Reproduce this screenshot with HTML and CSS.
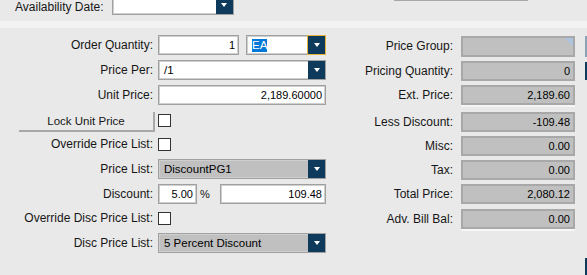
FILE: index.html
```html
<!DOCTYPE html>
<html lang="en">
<head>
  <meta charset="UTF-8">
  <title>Line Pricing</title>
  <link rel="stylesheet" href="styles.css">
</head>
<body>

  <!-- Availability -->
  <div class="topbar">
    <span class="top-label">Availability Date:</span>
    <div class="field combo date-combo">
      <span class="combo-text"></span>
      <span class="drop"></span>
    </div>
    <div class="cut-field"></div>
  </div>
  <div class="divider"></div>

  <div class="panel">
    <!-- Left side -->
    <div class="form left-form">
      <label>Order Quantity:</label>
      <div class="pair">
        <div class="field input qty">1</div>
        <div class="field combo uom">
          <span class="combo-text"><span class="selected">EA</span></span>
          <span class="drop focus"></span>
        </div>
      </div>

      <label>Price Per:</label>
      <div class="field combo">
        <span class="combo-text">/1</span>
        <span class="drop"></span>
      </div>

      <label>Unit Price:</label>
      <div class="field input">2,189.60000</div>

      <button class="lock-btn">Lock Unit Price</button>
      <div class="check-cell"><span class="check"></span></div>

      <label>Override Price List:</label>
      <div class="check-cell"><span class="check"></span></div>

      <label>Price List:</label>
      <div class="field combo locked">
        <span class="combo-text">DiscountPG1</span>
        <span class="drop"></span>
      </div>

      <label>Discount:</label>
      <div class="pair">
        <div class="field input pct">5.00</div>
        <span class="pct-sign">%</span>
        <div class="field input amount">109.48</div>
      </div>

      <label>Override Disc Price List:</label>
      <div class="check-cell"><span class="check"></span></div>

      <label>Disc Price List:</label>
      <div class="field combo locked">
        <span class="combo-text">5 Percent Discount</span>
        <span class="drop"></span>
      </div>
    </div>

    <!-- Right side -->
    <div class="form right-form">
      <label>Price Group:</label>
      <div class="ro group"></div>
      <label>Pricing Quantity:</label>
      <div class="ro">0</div>
      <label>Ext. Price:</label>
      <div class="ro lift">2,189.60</div>
      <label>Less Discount:</label>
      <div class="ro">-109.48</div>
      <label>Misc:</label>
      <div class="ro">0.00</div>
      <label>Tax:</label>
      <div class="ro">0.00</div>
      <label>Total Price:</label>
      <div class="ro">2,080.12</div>
      <label>Adv. Bill Bal:</label>
      <div class="ro lift">0.00</div>
    </div>

    <!-- next column, cut off by the window -->
    <div class="edge">
      <div class="edge-box pale"></div>
      <div class="edge-box dark"></div>
      <div class="edge-box dark bottom"></div>
    </div>
  </div>

</body>
</html>
```

FILE: styles.css
```css
body {
  margin: 0;
  font-family: "Liberation Sans", Arial, sans-serif;
  font-size: 12px;
  color: #161616;
  background: #e9e9e9;
  overflow: hidden;
  height: 275px;
}

.topbar {
  height: 21px;
  display: flex;
  align-items: flex-start;
}
.top-label {
  margin-left: 15px;
  line-height: 14px;
}
.date-combo {
  width: 122px;
  margin-left: 8px;
  margin-top: -5px;
}
.cut-field {
  width: 134px;
  height: 20px;
  margin-top: -19px;
  margin-left: 160px;
  border: 1px solid #a8a8a8;
  box-sizing: border-box;
}
.divider {
  height: 7px;
  background: #f2f2f2;
}

.panel {
  display: flex;
  align-items: flex-start;
  padding-top: 7px;
}

.form {
  display: grid;
  align-items: start;
}
.form label {
  text-align: right;
  line-height: 20px;
  white-space: nowrap;
}
.left-form {
  grid-template-columns: 153px 168px;
  grid-template-rows: 25px 25px 25px 24px 25px 25px 24px 25px 20px;
  column-gap: 5px;
}
.right-form {
  margin-left: 7px;
  margin-top: 1px;
  grid-template-columns: 120px 114px;
  grid-template-rows: 25px 24px 27px 24px 24px 24px 25px 20px;
  column-gap: 8px;
}

/* inputs */
.field {
  height: 20px;
  box-sizing: border-box;
  border: 1px solid #a0a0a0;
  box-shadow: inset 0 0 0 1px #cfcfcf;
  background: #fff;
  font-size: 11px;
  line-height: 18px;
  color: #000;
}
.input {
  text-align: right;
  padding-right: 3px;
}
.pair {
  display: flex;
  align-items: center;
}
.qty { width: 81px; }
.uom { width: 80px; margin-left: 7px; }
.pct { width: 39px; }
.pct-sign {
  width: 23px;
  padding-left: 3px;
  box-sizing: border-box;
  font-size: 11px;
}
.amount { width: 106px; }

.combo {
  display: flex;
}
.combo-text {
  flex: 1;
  padding-left: 5px;
  font-size: 11.5px;
  white-space: nowrap;
  overflow: hidden;
}
.combo.locked {
  background: #c0c0c0;
}
.selected {
  background: #0078d7;
  color: #fff;
  display: inline-block;
  line-height: 13px;
}
.drop {
  width: 17px;
  background: #0e3a5c;
  display: flex;
  align-items: center;
  justify-content: center;
}
.drop::after {
  content: "";
  border-left: 3px solid transparent;
  border-right: 3px solid transparent;
  border-top: 4px solid #fff;
}
.drop.focus {
  outline: 1px solid #e6b43a;
}

.lock-btn {
  justify-self: end;
  width: 136px;
  height: 20px;
  margin-top: 2px;
  margin-right: -2px;
  padding: 0;
  background: #e9e9e9;
  border: none;
  border-right: 2px solid #a8a8a8;
  border-bottom: 2px solid #a8a8a8;
  font-family: inherit;
  font-size: 11.5px;
  color: #161616;
}

.check-cell {
  height: 20px;
  display: flex;
  align-items: center;
}
.check {
  width: 13px;
  height: 13px;
  box-sizing: border-box;
  border: 1px solid #333;
  background: #fff;
}

/* read-only results */
.ro {
  height: 20px;
  box-sizing: border-box;
  border: 2px solid #a8a8a8;
  background: #c0c0c0;
  font-size: 11px;
  line-height: 16px;
  text-align: right;
  padding-right: 3px;
  color: #000;
}
.ro.group {
  height: 21px;
  background: linear-gradient(225deg, #adc3de 6px, #c0c0c0 6px);
}
.ro.lift {
  box-shadow: 0 2px 0 #f6f6f6;
}

.edge {
  margin-left: 10px;
  margin-top: 1px;
  display: flex;
  flex-direction: column;
}
.edge-box {
  width: 17px;
  height: 21px;
}
.edge-box.pale { background: #8aa2b8; }
.edge-box.dark { background: #0e3a5c; height: 18px; margin-top: 5px; }
.edge-box.bottom { margin-top: 178px; }
```
